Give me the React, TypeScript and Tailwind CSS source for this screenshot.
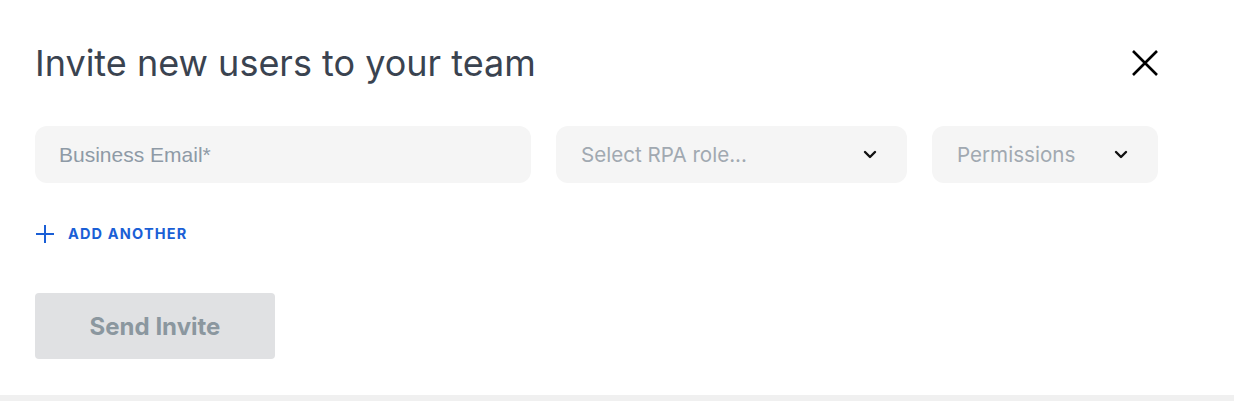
import { useState } from "react";

const inter = "font-['Inter','Noto_Sans',sans-serif]";

function Chevron() {
  return (
    <svg width="14" height="9" viewBox="0 0 14 9" fill="none" aria-hidden>
      <path d="M2 2l5 5 5-5" stroke="#111" strokeWidth="2.4" strokeLinecap="round" strokeLinejoin="round" />
    </svg>
  );
}

function SelectBox({ label, width }: { label: string; width: string }) {
  return (
    <button
      type="button"
      className={`flex h-[57px] ${width} shrink-0 items-center justify-between rounded-xl bg-[#f5f5f5] pl-[25px] pr-[30px] text-left`}
    >
      <span className={`${inter} pt-[2px] text-[20.6px] text-[#a1a9b1]`}>{label}</span>
      <Chevron />
    </button>
  );
}

export default function App() {
  const [email, setEmail] = useState("");

  return (
    <div className="flex min-h-[401px] w-full flex-col bg-white">
      <div className="px-[35px] pt-[43px]">
        <div className="flex h-10 w-[1123px] items-center justify-between">
          <h1 className={`${inter} text-[36px] font-normal leading-10 text-[#3a4350]`}>
            Invite new users to your team
          </h1>
          <button type="button" aria-label="Close" className="flex h-[26px] w-[26px] items-center justify-center">
            <svg width="26" height="26" viewBox="0 0 26 26" fill="none">
              <path d="M1 1l24 24M25 1L1 25" stroke="#000" strokeWidth="2.6" />
            </svg>
          </button>
        </div>

        <div className="mt-[43px] flex w-[1123px] gap-[25px]">
          <input
            value={email}
            onChange={(e) => setEmail(e.target.value)}
            placeholder="Business Email*"
            className="h-[57px] w-[496px] shrink-0 rounded-xl bg-[#f5f5f5] px-6 font-['Liberation_Sans',Arial,sans-serif] text-[21px] text-[#3a4350] outline-none placeholder:text-[#8e9aa6]"
          />
          <SelectBox label="Select RPA role..." width="w-[351px]" />
          <SelectBox label="Permissions" width="w-[226px]" />
        </div>

        <button type="button" className="mt-[41px] flex h-5 items-center gap-[14px] pl-px">
          <svg width="18" height="18" viewBox="0 0 18 18" fill="none" aria-hidden className="-mt-px">
            <path d="M9 0v18M0 9h18" stroke="#1a5fd6" strokeWidth="2" />
          </svg>
          <span className={`${inter} text-[14.5px] font-bold tracking-[0.08em] text-[#1a5fd6]`}>ADD ANOTHER</span>
        </button>

        <button
          type="button"
          disabled
          className={`${inter} mt-[49px] flex h-[66px] w-[240px] items-center justify-center rounded bg-[#e0e1e3] pt-[2px] text-[24px] font-bold text-[#8b979f]`}
        >
          Send Invite
        </button>
      </div>

      <div className="mt-[36px] h-[6px] w-full bg-[#f0f0f0]" />
    </div>
  );
}
